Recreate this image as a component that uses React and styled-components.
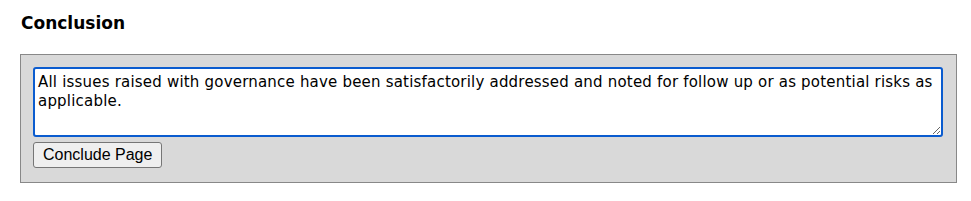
import styled, { createGlobalStyle } from "styled-components";

const GlobalStyle = createGlobalStyle`
    html, body {
        margin: 0;
        padding: 0;
        background: #ffffff;
    }
`;

const Page = styled.div`
    padding: 12px 14px 0 20px;
    font-family: "DejaVu Sans", Verdana, sans-serif;
    color: #000;
`;

const Title = styled.h2`
    margin: 0 0 20px 1px;
    font-size: 17px;
    line-height: 22px;
    font-weight: bold;
`;

const Panel = styled.div`
    background: #d9d9d9;
    border: 1px solid #888888;
    padding: 12px 13px 14px 12px;
    display: flex;
    flex-direction: column;
    align-items: flex-start;
    gap: 5px;
`;

const NoteArea = styled.textarea`
    box-sizing: border-box;
    width: 100%;
    height: 70px;
    margin: 0;
    padding: 4px 3px;
    border: 2px solid #0b5ccf;
    border-radius: 3px;
    outline: none;
    background: #fff;
    font-family: "DejaVu Sans", Verdana, sans-serif;
    font-size: 15px;
    letter-spacing: 0.2px;
    line-height: 19px;
    color: #000;
    resize: both;
`;

const Button = styled.button`
    box-sizing: border-box;
    height: 26px;
    padding: 0 9px;
    border: 1px solid #767676;
    border-radius: 3px;
    background: #efefef;
    font-family: "Liberation Sans", Arial, sans-serif;
    font-size: 16px;
    color: #000;
    cursor: pointer;
`;

const App = () => {
    return (
        <>
            <GlobalStyle />
            <Page>
                <Title>Conclusion</Title>
                <Panel>
                    <NoteArea
                        defaultValue="All issues raised with governance have been satisfactorily addressed and noted for follow up or as potential risks as applicable."
                    />
                    <Button>Conclude Page</Button>
                </Panel>
            </Page>
        </>
    );
};

export default App;
